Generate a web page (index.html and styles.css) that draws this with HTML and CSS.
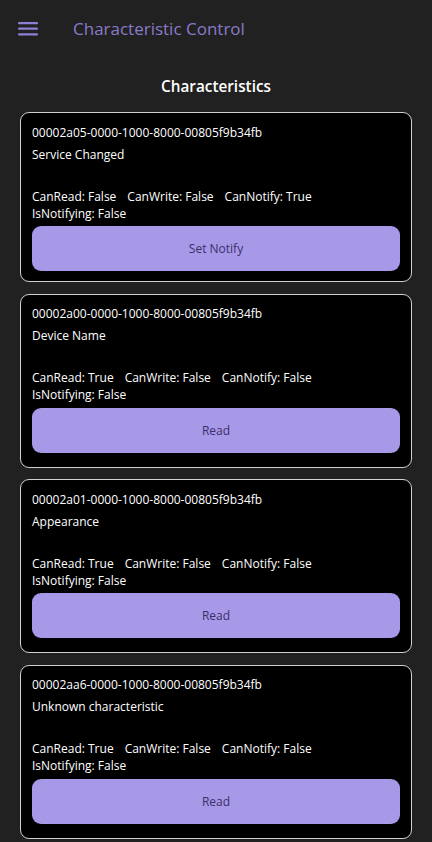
FILE: index.html
```html
<!DOCTYPE html>
<html lang="en">
<head>
<meta charset="utf-8">
<title>Characteristic Control</title>
<link rel="stylesheet" href="styles.css">
</head>
<body>
<header class="appbar">
  <svg class="menu" width="20" height="14" viewBox="0 0 20 14" aria-hidden="true">
    <rect x="0" y="0" width="20" height="2.2" rx="1" fill="#8e7fd6"/>
    <rect x="0" y="5.6" width="20" height="2.2" rx="1" fill="#8e7fd6"/>
    <rect x="0" y="11.2" width="20" height="2.2" rx="1" fill="#8e7fd6"/>
  </svg>
  <h1 class="title">Characteristic Control</h1>
</header>
<main class="content">
  <h2 class="section-title">Characteristics</h2>
  <div class="list">
    <section class="card card-first">
      <div class="uuid">00002a05-0000-1000-8000-00805f9b34fb</div>
      <div class="name">Service Changed</div>
      <div class="props"><span>CanRead: False</span><span>CanWrite: False</span><span>CanNotify: True</span><span>IsNotifying: False</span></div>
      <button class="action">Set Notify</button>
    </section>
    <section class="card">
      <div class="uuid">00002a00-0000-1000-8000-00805f9b34fb</div>
      <div class="name">Device Name</div>
      <div class="props"><span>CanRead: True</span><span>CanWrite: False</span><span>CanNotify: False</span><span>IsNotifying: False</span></div>
      <button class="action">Read</button>
    </section>
    <section class="card">
      <div class="uuid">00002a01-0000-1000-8000-00805f9b34fb</div>
      <div class="name">Appearance</div>
      <div class="props"><span>CanRead: True</span><span>CanWrite: False</span><span>CanNotify: False</span><span>IsNotifying: False</span></div>
      <button class="action">Read</button>
    </section>
    <section class="card">
      <div class="uuid">00002aa6-0000-1000-8000-00805f9b34fb</div>
      <div class="name">Unknown characteristic</div>
      <div class="props"><span>CanRead: True</span><span>CanWrite: False</span><span>CanNotify: False</span><span>IsNotifying: False</span></div>
      <button class="action">Read</button>
    </section>
  </div>
</main>
</body>
</html>
```
FILE: styles.css
```css
* { box-sizing: border-box; }
html, body {
  margin: 0;
  padding: 0;
  background: #212121;
  color: #ffffff;
  font-family: "Open Sans", "Noto Sans", sans-serif;
  overflow: hidden;
}
.appbar {
  height: 57px;
  display: flex;
  align-items: center;
  padding-left: 18px;
  gap: 35px;
}
.menu { display: block; flex: none; }
.title {
  margin: 0;
  font-size: 17px;
  font-weight: 400;
  color: #8a7ac9;
  line-height: 24px;
}
.content { padding: 0 20px; }
.section-title {
  margin: 17px 0 14px;
  text-align: center;
  font-size: 15.3px;
  font-weight: 600;
  line-height: 24px;
}
.list {
  display: flex;
  flex-direction: column;
  gap: 11.5px;
}
.card {
  background: #000;
  border: 1.5px solid #d0d0d0;
  border-radius: 9px;
  padding: 9.5px 11px 14px;
  display: flex;
  flex-direction: column;
}
.card-first { padding-bottom: 10px; }
.uuid {
  font-size: 12px;
  line-height: 20px;
}
.name {
  margin-top: 2px;
  font-size: 12px;
  line-height: 20px;
}
.props {
  margin-top: 23px;
  display: flex;
  flex-wrap: wrap;
  column-gap: 11px;
  font-size: 12px;
  line-height: 17px;
}
.action {
  margin-top: 4.5px;
  height: 45px;
  border: none;
  border-radius: 9px;
  background: #a898e8;
  color: #3b2f68;
  font-family: inherit;
  font-size: 12px;
}
```
